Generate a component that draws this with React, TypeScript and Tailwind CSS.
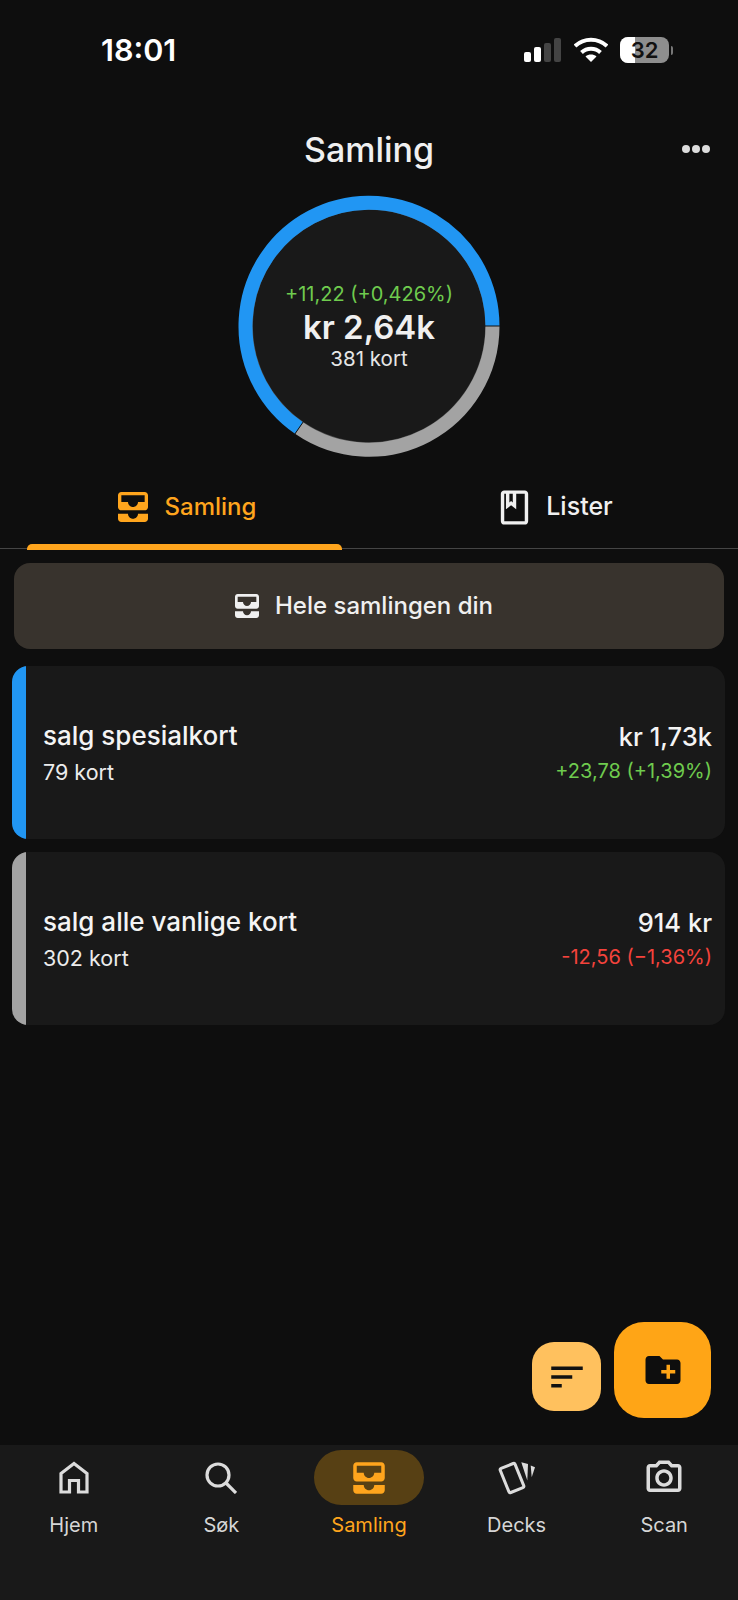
import { MdAllInbox, MdCreateNewFolder, MdOutlineBook, MdOutlinePhotoCamera, MdSort } from "react-icons/md";

const sans = "font-['Inter','Liberation_Sans',sans-serif]";

function Signal() {
  return (
    <svg width="38" height="24" viewBox="0 0 38 24">
      <rect x="0" y="14" width="7" height="10" rx="2" fill="#fff" />
      <rect x="10" y="9" width="7" height="15" rx="2" fill="#fff" />
      <rect x="20" y="5" width="7" height="19" rx="2" fill="#444" />
      <rect x="30" y="0" width="7" height="24" rx="2" fill="#444" />
    </svg>
  );
}

function Wifi() {
  return (
    <svg width="34" height="26" viewBox="0 0 34 26" fill="none" stroke="#fff" strokeWidth="4">
      <path d="M1 9c9-8.500 23-8.500 32 0" />
      <path d="M7.500 15.500c5.400-5 13.600-5 19 0" />
      <path d="M17 25l-5.500-5.500c3.200-2.600 7.800-2.600 11 0z" fill="#fff" stroke="none" />
    </svg>
  );
}

function Battery() {
  return (
    <div className="flex items-center gap-[2px]">
      <div className="relative flex h-[26px] w-[49px] items-center justify-center overflow-hidden rounded-[8px] bg-[#8e8e8e]">
        <div className="absolute inset-y-0 left-0 w-[15px] bg-white" />
        <span className="relative text-[22px] leading-none font-semibold text-[#111]">32</span>
      </div>
      <div className="h-[9px] w-[2px] rounded-r-full bg-[#777]" />
    </div>
  );
}

function Donut() {
  return (
    <div className="relative mx-auto flex h-[262px] w-[262px] flex-col items-center justify-center">
      <svg className="absolute inset-0" width="262" height="262" viewBox="0 0 262 262">
        <circle cx="131" cy="131" r="117" fill="#191919" stroke="#4a4a4a" strokeWidth="1.500" />
        <path d="M254.500 131A123.500 123.500 0 0 1 61 233" fill="none" stroke="#a3a3a3" strokeWidth="14" />
        <path d="M61 233A123.500 123.500 0 1 1 254.500 131" fill="none" stroke="#2196f3" strokeWidth="14" />
        <path d="M247 131H262" stroke="#111" strokeWidth="1" />
        <path d="M65.500 226.500 56.500 239.500" stroke="#111" strokeWidth="1" />
      </svg>
      <p className="relative text-[20px] leading-[26px] text-[#6fcb4e]">+11,22 (+0,426%)</p>
      <p className="relative text-[33px] leading-[40px] font-semibold text-[#f0f0f0]">kr 2,64k</p>
      <p className="relative text-[20.500px] leading-[24px] text-[#e6e6e6]">381 kort</p>
    </div>
  );
}

function Samlekort({
  farge,
  navn,
  antall,
  verdi,
  endring,
  endringFarge,
}: {
  farge: string;
  navn: string;
  antall: string;
  verdi: string;
  endring: string;
  endringFarge: string;
}) {
  return (
    <div className="flex h-[173px] overflow-hidden rounded-[16px] bg-[#191919]">
      <div className={`w-[14px] shrink-0 ${farge}`} />
      <div className="flex flex-1 items-center justify-between pr-[13px] pl-[17px]">
        <div className="pt-[2px]">
          <p className="text-[26px] leading-[37px] font-medium text-[#f4f4f4]">{navn}</p>
          <p className="text-[21.500px] leading-[37px] text-[#ececec]">{antall}</p>
        </div>
        <div className="pt-[2px] text-right">
          <p className="text-[25.500px] leading-[34px] font-medium text-[#f4f4f4]">{verdi}</p>
          <p className={`text-[20px] leading-[34px] ${endringFarge}`}>{endring}</p>
        </div>
      </div>
    </div>
  );
}

function HomeIcon() {
  return (
    <svg width="30" height="33" viewBox="0 0 30 33" fill="none" stroke="#dcdcdc" strokeWidth="3.200">
      <path d="M2 31V12.500L15 2.500 28 12.500V31H19.500V19.500H10.500V31z" />
    </svg>
  );
}

function SearchIcon() {
  return (
    <svg width="32" height="32" viewBox="0 0 32 32" fill="none" stroke="#dcdcdc" strokeWidth="3.200">
      <circle cx="13" cy="13" r="11" />
      <path d="M21 21 31 31" />
    </svg>
  );
}

function DecksIcon() {
  return (
    <svg width="39" height="34" viewBox="0 0 39 34" fill="none">
      <rect x="7" y="4" width="16" height="26" rx="1.500" transform="rotate(-22 15 17)" stroke="#dcdcdc" strokeWidth="3" />
      <path d="M24.300 1.200 31 3 30.300 19.500z" fill="#dcdcdc" />
      <path d="M33.700 4.500 38 6.200 34.700 16.200z" fill="#dcdcdc" />
    </svg>
  );
}

function NavPunkt({ navn, aktiv, children }: { navn: string; aktiv?: boolean; children: React.ReactNode }) {
  return (
    <div className="flex flex-1 flex-col items-center">
      <div className={`flex h-[55px] w-[110px] items-center justify-center rounded-full ${aktiv ? "bg-[#574014]" : ""}`}>
        {children}
      </div>
      <span className={`mt-[7px] text-[20px] leading-[26px] ${aktiv ? "text-[#ffa51d]" : "text-[#d6d6d6]"}`}>{navn}</span>
    </div>
  );
}

export default function App() {
  return (
    <div className={`relative flex h-[1600px] w-[738px] flex-col overflow-hidden bg-[#0e0e0e] ${sans}`}>
      <div className="flex h-[100px] items-start justify-between pt-[36px] pr-[65px] pl-[101px]">
        <span className="text-[30.500px] leading-[28px] font-semibold text-white">18:01</span>
        <div className="flex items-center gap-[12px] pt-[1px]">
          <Signal />
          <Wifi />
          <Battery />
        </div>
      </div>

      <div className="relative flex h-[95px] shrink-0 items-start justify-center">
        <h1 className="text-[34px] leading-[100px] font-medium text-[#f0f0f0]">Samling</h1>
        <div className="absolute top-[45px] right-[28px] flex gap-[2px]">
          <span className="h-[8px] w-[8px] rounded-full bg-[#dcdcdc]" />
          <span className="h-[8px] w-[8px] rounded-full bg-[#dcdcdc]" />
          <span className="h-[8px] w-[8px] rounded-full bg-[#dcdcdc]" />
        </div>
      </div>

      <Donut />

      <div className="relative mt-[33px] flex h-[59px] border-b border-[#454545]">
        <div className="flex flex-1 items-center justify-center gap-[12px] pb-[24px] text-[#ffa51d]">
          <MdAllInbox size={40} />
          <span className="text-[24px] font-medium">Samling</span>
        </div>
        <div className="flex flex-1 items-center justify-center gap-[11px] pb-[24px] text-[#f0f0f0]">
          <MdOutlineBook size={41} />
          <span className="text-[25px] font-medium">Lister</span>
        </div>
        <div className="absolute bottom-[-2px] left-[27px] h-[6px] w-[315px] rounded-t-[5px] bg-[#ffa51d]" />
      </div>

      <div className="mt-[14px] flex h-[86px] w-[710px] items-center justify-center gap-[12px] self-center rounded-[16px] bg-[#38332d] pr-[14px] text-[#f0f0f0]">
        <MdAllInbox size={32} />
        <span className="text-[24px] font-medium">Hele samlingen din</span>
      </div>

      <div className="mt-[17px] flex flex-col gap-[13px] pr-[13px] pl-[12px]">
        <Samlekort
          farge="bg-[#2196f3]"
          navn="salg spesialkort"
          antall="79 kort"
          verdi="kr 1,73k"
          endring="+23,78 (+1,39%)"
          endringFarge="text-[#6fcb4e]"
        />
        <Samlekort
          farge="bg-[#a3a3a3]"
          navn="salg alle vanlige kort"
          antall="302 kort"
          verdi="914 kr"
          endring="-12,56 (−1,36%)"
          endringFarge="text-[#f4433c]"
        />
      </div>

      <div className="absolute top-[1342px] left-[532px] flex h-[69px] w-[69px] items-center justify-center rounded-[22px] bg-[#ffc15e] text-[#111]">
        <MdSort size={42} />
      </div>
      <div className="absolute top-[1322px] left-[614px] flex h-[96px] w-[97px] items-center justify-center rounded-[30px] bg-[#ffa516] text-[#0e0e0e]">
        <MdCreateNewFolder size={42} />
      </div>

      <div className="mt-auto flex h-[155px] bg-[#191919] pt-[5px]">
        <NavPunkt navn="Hjem">
          <HomeIcon />
        </NavPunkt>
        <NavPunkt navn="Søk">
          <SearchIcon />
        </NavPunkt>
        <NavPunkt navn="Samling" aktiv>
          <MdAllInbox size={42} color="#ffa51d" />
        </NavPunkt>
        <NavPunkt navn="Decks">
          <DecksIcon />
        </NavPunkt>
        <NavPunkt navn="Scan">
          <MdOutlinePhotoCamera size={42} color="#dcdcdc" />
        </NavPunkt>
      </div>
    </div>
  );
}
